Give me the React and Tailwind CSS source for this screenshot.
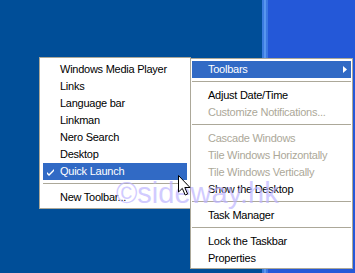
import React from 'react';

const font = { fontFamily: '"Liberation Sans", Arial, sans-serif' };

const Check = () => (
    <svg width="7" height="7" viewBox="0 0 7 7" className="block">
        <path d="M0 3 L0 5 L2 7 L7 2 L7 0 L2 5 Z" fill="#fff" />
    </svg>
);

const SubArrow = () => (
    <svg width="4" height="7" viewBox="0 0 4 7" className="block">
        <path d="M0 0 L4 3.5 L0 7 Z" fill="#fff" />
    </svg>
);

const Cursor = () => (
    <svg width="13" height="21" viewBox="0 0 13 21" className="block">
        <path
            d="M0.5 0.5 L0.5 17 L4.3 13.4 L7.2 20 L9.6 19 L6.8 12.5 L12 12.5 Z"
            fill="#fff"
            stroke="#000"
            strokeWidth="1"
            strokeLinejoin="miter"
        />
    </svg>
);

const Item = ({ label, pad, disabled, active, checked, sub }) => (
    <div
        className={`relative h-[17px] flex items-center text-[11px] tracking-[-0.25px] leading-none ${active ? 'bg-[#316ac5] text-white' : disabled ? 'text-[#aca899]' : 'text-black'
            }`}
        style={{ paddingLeft: pad }}
    >
        {checked && (
            <span className="absolute left-[4px] top-[6px]">
                <Check />
            </span>
        )}
        <span className="flex-1">{label}</span>
        {sub && (
            <span className="pr-[4px]">
                <SubArrow />
            </span>
        )}
    </div>
);

const Sep = () => (
    <div className="h-[9px] pt-[3px]">
        <div className="h-px bg-[#aca899]" />
    </div>
);

const toolbarItems = [
    'Windows Media Player',
    'Links',
    'Language bar',
    'Linkman',
    'Nero Search',
    'Desktop',
];

export default function App() {
    return (
        <div className="relative w-[355px] h-[273px] overflow-hidden flex" style={font}>
            {/* desktop + taskbar */}
            <div className="w-[262px] h-full bg-[#004e98]" />
            <div className="w-[2px] h-full bg-[#3a7be0]" />
            <div className="w-[2px] h-full bg-[#5896ee]" />
            <div className="w-[2px] h-full bg-[#3b78e2]" />
            <div className="flex-1 h-full bg-[#2458d8]" />

            {/* toolbars submenu */}
            <div className="absolute left-[39px] top-[57px] w-[152px] h-[152px] bg-white border border-[#aca899] px-[3px] pt-[3px] pb-[2px]">
                {toolbarItems.map((t) => (
                    <Item key={t} label={t} pad={17} />
                ))}
                <Item label="Quick Launch" pad={17} active checked />
                <Sep />
                <Item label="New Toolbar..." pad={17} />
            </div>

            {/* taskbar context menu */}
            <div className="absolute left-[190px] top-[58px] w-[163px] h-[211px] bg-white border border-[#aca899] px-[1px] pt-[2px] pb-[1px]">
                <Item label="Toolbars" pad={16} active sub />
                <Sep />
                <Item label="Adjust Date/Time" pad={16} />
                <Item label="Customize Notifications..." pad={16} disabled />
                <Sep />
                <Item label="Cascade Windows" pad={16} disabled />
                <Item label="Tile Windows Horizontally" pad={16} disabled />
                <Item label="Tile Windows Vertically" pad={16} disabled />
                <Item label="Show the Desktop" pad={16} />
                <Sep />
                <Item label="Task Manager" pad={16} />
                <Sep />
                <Item label="Lock the Taskbar" pad={16} />
                <Item label="Properties" pad={16} />
            </div>

            {/* watermark */}
            <div className="absolute left-[116px] top-[179px] text-[29px] leading-none text-[#bdb4ff]/70 pointer-events-none">
                ©sideway.hk
            </div>

            {/* mouse pointer */}
            <div className="absolute left-[178px] top-[175px]">
                <Cursor />
            </div>
        </div>
    );
}
